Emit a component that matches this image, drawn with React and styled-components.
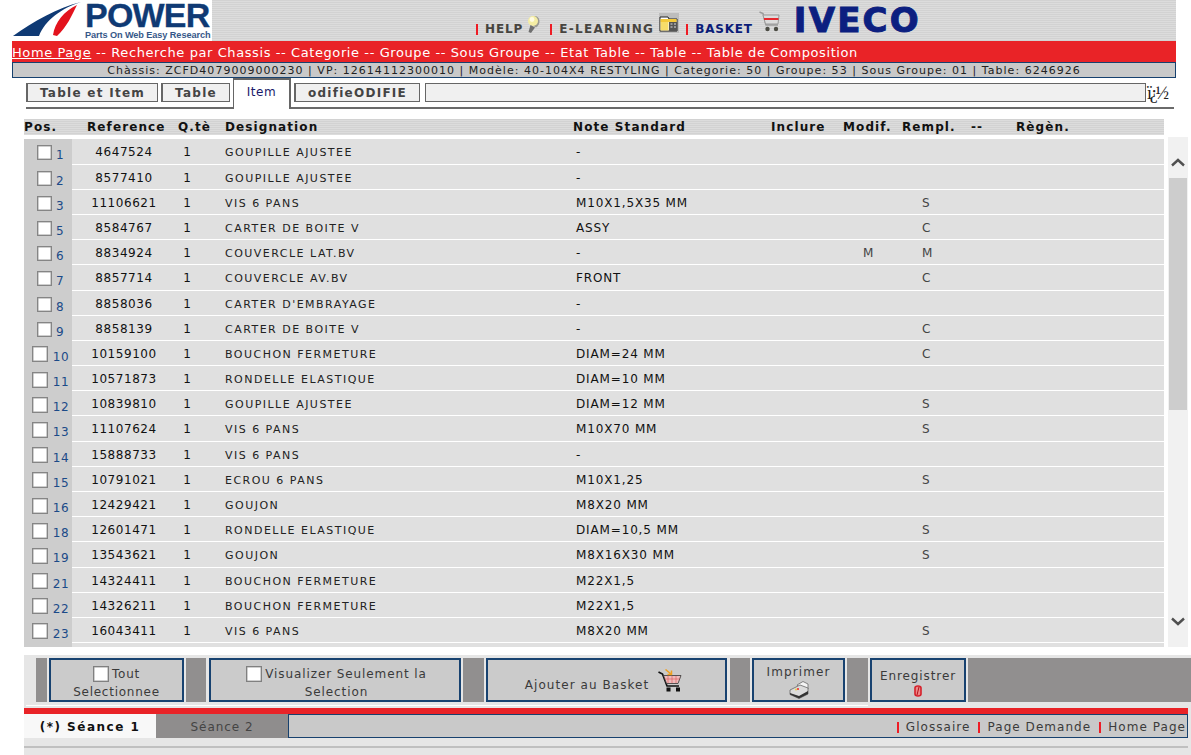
import React from "react";
import styled, { createGlobalStyle } from "styled-components";

const Global = createGlobalStyle`
  html, body { margin: 0; padding: 0; background: #fff; }
  body { font-family: "DejaVu Sans", Verdana, sans-serif; }
  * { box-sizing: border-box; }
`;

const stripes = `repeating-linear-gradient(180deg, #d2d2d2 0 1px, #dcdcdc 1px 2px)`;

const Page = styled.div`
  width: 1191px; height: 755px; overflow: hidden; position: relative; background: #fff;
`;
const Top = styled.div`
  width: 1164px; margin-left: 12px;
`;
const Header = styled.header`
  display: flex; height: 41px; background: ${stripes};
`;
const Logo = styled.div`
  width: 200px; height: 41px; background: #fff; display: flex; flex: none;
`;
const LogoText = styled.div`
  display: flex; flex-direction: column; color: #0f3a74; font-family: "Liberation Sans", Arial, sans-serif; font-weight: 700; padding-top: 1px; flex: none;
`;
const LogoWord = styled.div`
  font-size: 34px; line-height: 29px; height: 29px; letter-spacing: -0.8px; -webkit-text-stroke: 0.3px #0f3a74;
`;
const LogoSub = styled.div`
  font-size: 9.2px; line-height: 10px; letter-spacing: -0.1px; white-space: nowrap; opacity: .85;
`;
const HeadLinks = styled.nav`
  display: flex; align-items: flex-end; padding-left: 264px; height: 41px; padding-bottom: 5px; position: relative;
`;
const HeadPipe = styled.span`
  width: 2px; height: 11px; background: #ee1c25; margin: 0 7px 1px 0; flex: none; align-self: flex-end;
`;
const HeadLink = styled.span`
  font-weight: 700; font-size: 12px; line-height: 14px; letter-spacing: ${p => p.$ls || 0}px; white-space: nowrap;
  color: ${p => p.$navy ? "#0a1c78" : "#47443f"}; margin-right: ${p => p.$mr || 0}px;
`;
const IconWrap = styled.span`
  display: flex; flex: none; margin: 0 ${p => p.$mr}px ${p => p.$mb}px 0;
`;
const Iveco = styled.span`
  font-family: "DejaVu Sans", sans-serif; font-weight: 700; font-size: 34px; line-height: 30px; letter-spacing: 2.2px; color: #0c1f80;
  -webkit-text-stroke: 1px #0c1f80; margin: 0 0 1px 6px; align-self: flex-end;
`;
const RedNav = styled.div`
  height: 21px; background: #e92327; color: #fff; font-size: 13px; line-height: 23px; white-space: nowrap; letter-spacing: 0.59px;
  a { color: #fff; text-decoration: underline; }
`;
const InfoBar = styled.div`
  height: 16px; background: #c9c9c9; border: 1px solid #17416e; font-size: 11px; line-height: 15px;
  text-align: center; color: #222; white-space: nowrap; letter-spacing: 1.02px;
`;
const TabRow = styled.div`
  display: flex; align-items: flex-start; margin-left: 26px; width: 1148px; height: 31px; border-bottom: 2px solid #6a6a6a;
`;
const TabBtn = styled.button`
  height: 19px; margin: 5px 3px 0 0; padding: 0; border: 1px solid #666; border-left-width: 2px; background: #f0f0f0;
  font: 700 12px/16px "DejaVu Sans", sans-serif; color: #444; letter-spacing: 1.27px; width: ${p => p.$w}px; text-align: center; flex: none;
`;
const ActiveTab = styled.div`
  width: 58px; height: 31px; margin-right: 3px; background: #fff; border: 1px solid #666; border-top-width: 2px; border-right-width: 2px; border-bottom: 0;
  font-size: 12px; line-height: 25px; letter-spacing: .6px; text-align: center; color: #1a1a6a; flex: none;
`;
const EmptyBox = styled.div`
  width: 721px; height: 19px; margin: 5px 0 0 2px; border: 1px solid #666; background: #f0f0f0; flex: none;
`;
const Garbled = styled.span`
  font-family: "Liberation Serif", serif; font-size: 18px; line-height: 20px; letter-spacing: -2.2px; color: #222; margin: 5px 0 0 1px; white-space: nowrap;
`;
const HeadRow = styled.div`
  display: grid; grid-template-columns: 63px 91px 47px 348px 198px 72px 59px 69px 45px 1fr;
  width: 1140px; height: 16px; margin: 10px 0 2px 24px; background: ${stripes};
  font-weight: 700; font-size: 12px; line-height: 17px; color: #111; letter-spacing: 1.1px; white-space: nowrap;
`;
const Body = styled.div`
  display: flex; gap: 4px; margin-left: 24px; height: 510px;
`;
const List = styled.div`
  width: 1140px; padding-top: 2.4px; display: flex; flex-direction: column; gap: 1px; overflow: hidden; flex: none;
`;
const Row = styled.div`
  display: grid; grid-template-columns: 48px 104px 22px 27px 348px 198px 72px 59px 1fr;
  height: 24.2px; flex: none; background: #e0e0e0; font-size: 12px; line-height: 26px; color: #111; white-space: nowrap;
`;
const PosCell = styled.div`
  background: #cdcdcd; display: flex; align-items: center; justify-content: center; gap: ${p => p.$wide ? 5 : 4}px; color: #1b4a88;
  padding-left: ${p => p.$wide ? 5 : 5}px; line-height: 14px;
`;
const Box = styled.span`
  width: ${p => p.$wide ? 16 : 15}px; height: ${p => p.$wide ? 16 : 15}px; background: #fff; border: 1px solid #858585; box-shadow: inset 0 0 0 .5px #a0a0a0; display: block; flex: none;
`;
const Num = styled.span`
  margin-top: 5px; letter-spacing: .5px;
`;
const Ref = styled.div`
  text-align: center; letter-spacing: 0.55px;
`;
const Qty = styled.div` text-align: center; `;
const Desig = styled.div`
  grid-column: 5; font-size: 11px; line-height: 27px; letter-spacing: 1.48px; color: #222;
`;
const Note = styled.div`
  padding-left: 3px; letter-spacing: 0.85px;
`;
const Flag = styled.div`
  padding-left: ${p => p.$pl}px; color: #444; letter-spacing: .3px;
`;
const Scroll = styled.aside`
  width: 20px; height: 510px; background: #f1f1f1; flex: none; display: flex; flex-direction: column; align-items: center;
`;
const Arrow = styled.div`
  height: 41px; flex: none; display: flex; align-items: center; justify-content: center; padding: ${p => p.$pt || 0}px 0 ${p => p.$pb || 0}px;
`;
const Thumb = styled.div`
  width: 18px; height: 232px; background: #cdcdcd; flex: none;
`;
const Gutter = styled.div` flex: 1; `;
const Bottom = styled.footer`
  margin: 8px 0 0 24px; height: 100px; background: #e6e6e6; padding-top: 3px;
`;
const Tools = styled.div`
  display: flex; height: 44px; padding-left: 12px;
`;
const Spacer = styled.span`
  width: ${p => p.$w}px; flex: ${p => p.$grow ? 1 : "none"}; background: #918f8f; margin: 0 ${p => p.$mr ?? 2}px 0 ${p => p.$ml ?? 2}px;
`;
const Tool = styled.button`
  width: ${p => p.$w}px; height: 44px; border: 2px solid #184270; background: #cbcbcb; padding: ${p => p.$pt ?? 5}px ${p => p.$pr ?? 0}px 0 ${p => p.$pl ?? 0}px; flex: none;
  font: 12px/18px "DejaVu Sans", sans-serif; color: #3a3a3a; letter-spacing: ${p => p.$ls ?? .75}px; white-space: nowrap;
  display: flex; flex-direction: column; align-items: center; justify-content: ${p => p.$j || "center"};
`;
const ToolLine = styled.span`
  display: flex; align-items: center; justify-content: center; gap: ${p => p.$gap ?? 3}px;
`;
const ToolBox = styled.span`
  width: 16px; height: 16px; background: #fff; border: 1px solid #808080; box-shadow: inset 0 0 0 .5px #a0a0a0; display: block; flex: none;
`;
const BasketLabel = styled.span` padding-top: 10px; `;
const SaveLabel = styled.span` padding-top: 3px; `;
const WhiteLine = styled.div`
  width: 842px; height: 1px; background: #fff; margin: 3px 0 0 2px;
`;
const RedBar = styled.div`
  width: 1164px; height: 6px; background: #e92327; margin-top: 2px;
`;
const Sessions = styled.div`
  display: flex; width: 1164px; height: 24px; font-size: 12px; line-height: 27px; white-space: nowrap;
`;
const SessionOn = styled.div`
  width: 132px; height: 24px; background: #f8f8f8; color: #111; font-weight: 700; letter-spacing: 1.5px; text-align: center; flex: none;
`;
const SessionOff = styled.div`
  width: 132px; height: 24px; background: #8f8d8d; color: #444; letter-spacing: .95px; text-align: center; flex: none;
`;
const SessionBar = styled.div`
  flex: 1; height: 24px; background: #c9c9c9; border: 1px solid #17416e; display: flex; align-items: center; justify-content: flex-end; padding: 2px 1px 0 0;
  color: #3b3b3b; letter-spacing: 1.05px; line-height: 20px;
`;
const FootPipe = styled.span`
  width: 2px; height: 11px; background: #ee1c25; margin: 0 7px 0 8px; flex: none;
`;
const Rule = styled.div`
  width: 1164px; height: 2px; background: #c0c0c0; margin-top: 8px;
`;

const rows = [
  ["1","4647524","GOUPILLE AJUSTEE","-","",""],
  ["2","8577410","GOUPILLE AJUSTEE","-","",""],
  ["3","11106621","VIS 6 PANS","M10X1,5X35 MM","","S"],
  ["5","8584767","CARTER DE BOITE V","ASSY","","C"],
  ["6","8834924","COUVERCLE LAT.BV","-","M","M"],
  ["7","8857714","COUVERCLE AV.BV","FRONT","","C"],
  ["8","8858036","CARTER D'EMBRAYAGE","-","",""],
  ["9","8858139","CARTER DE BOITE V","-","","C"],
  ["10","10159100","BOUCHON FERMETURE","DIAM=24 MM","","C"],
  ["11","10571873","RONDELLE ELASTIQUE","DIAM=10 MM","",""],
  ["12","10839810","GOUPILLE AJUSTEE","DIAM=12 MM","","S"],
  ["13","11107624","VIS 6 PANS","M10X70 MM","","S"],
  ["14","15888733","VIS 6 PANS","-","",""],
  ["15","10791021","ECROU 6 PANS","M10X1,25","","S"],
  ["16","12429421","GOUJON","M8X20 MM","",""],
  ["18","12601471","RONDELLE ELASTIQUE","DIAM=10,5 MM","","S"],
  ["19","13543621","GOUJON","M8X16X30 MM","","S"],
  ["21","14324411","BOUCHON FERMETURE","M22X1,5","",""],
  ["22","14326211","BOUCHON FERMETURE","M22X1,5","",""],
  ["23","16043411","VIS 6 PANS","M8X20 MM","","S"],
];

const Swoosh = () => (
  <svg width="73" height="41" viewBox="0 0 73 41" style={{ flex: "none" }}>
    <path d="M1 36 C22 21 45 8 69 2 C50 8 33 20 27 36 Z" fill="#0f3a74" />
    <path d="M41 35 C43 22 52 11 65 5 C60 15 55 27 45 36 Z" fill="#e3131d" />
  </svg>
);
const Bulb = () => (
  <svg width="16" height="19" viewBox="0 0 16 19">
    <path d="M9 1 Q14 1 14.5 6 Q14.5 10 11 12.5 L7 10 Z" fill="#9a9a92" />
    <circle cx="8" cy="6" r="5" fill="#f4eda4" />
    <circle cx="7" cy="4.5" r="2.4" fill="#fffbe2" />
    <path d="M5.5 10 L10 12.5 L6 18 L3.5 17 Z" fill="#6f6f6f" />
  </svg>
);
const Folder = () => (
  <svg width="20" height="20" viewBox="0 0 20 20">
    <rect width="20" height="20" fill="#bdbdbd" />
    <path d="M1 4 H9 L10 6 H18 V18 H1 Z" fill="#fff" stroke="#222" />
    <rect x="1.5" y="6" width="16" height="3" fill="#f4c93a" />
    <rect x="1.5" y="9" width="8" height="8.5" fill="#f7dc6a" />
    <rect x="10" y="9" width="8" height="9" fill="#555" />
    <path d="M11.5 11 h2 M15 11 h2 M11.5 14 h2 M15 14 h2" stroke="#ddd" />
  </svg>
);
const Cart = () => (
  <svg width="21" height="21" viewBox="0 0 21 21">
    <path d="M0.5 1 L4 2.5 L7 14 H19" fill="none" stroke="#9a9a9a" strokeWidth="1.5" />
    <path d="M4 4 H20 L19 13 H6.5 Z" fill="#dcdcdc" stroke="#9a9a9a" />
    <rect x="5" y="7" width="14.5" height="2" fill="#e5282e" />
    <circle cx="8.5" cy="18" r="2.2" fill="#4c4c44" />
    <circle cx="17" cy="18" r="2.2" fill="#4c4c44" />
  </svg>
);
const AddCart = () => (
  <svg width="24" height="23" viewBox="0 0 24 23">
    <path d="M0.5 3 L4.5 5 L9 17 H21" fill="none" stroke="#111" strokeWidth="1.7" />
    <path d="M5.5 6.5 H23 L20 14.5 H8.5 Z" fill="#eebcbc" stroke="#333" strokeWidth=".8" />
    <path d="M10 7 V14 M14 7 V14 M18 7 V14 M7 10 H22" stroke="#d55" strokeWidth=".6" />
    <rect x="8.5" y="18.5" width="4" height="4" fill="#111" />
    <rect x="18" y="18.5" width="4" height="4" fill="#111" />
    <path d="M7.5 0.5 L13 5 M13.5 1.5 V5.5 H9.5" fill="none" stroke="#f0a020" strokeWidth="1.5" />
  </svg>
);
const Printer = () => (
  <svg width="20" height="18" viewBox="0 0 20 18">
    <path d="M8 4 L14 0.5 L19 3 L19 8 L13 10 Z" fill="#f4f4f4" stroke="#6a6a6a" strokeWidth=".8" />
    <path d="M1 9 L11 4 L19 7 V13 L10 17.5 L1 13.5 Z" fill="#dcdcdc" stroke="#666" strokeWidth=".8" />
    <path d="M1 12 L10 15 L19 10 V13 L10 17.5 L1 13.5 Z" fill="#333" />
    <circle cx="9" cy="8" r="1.1" fill="#e33" />
    <circle cx="7" cy="8.5" r="1" fill="#e8d040" />
  </svg>
);
const Save = () => (
  <svg width="10" height="12" viewBox="0 0 10 12">
    <path d="M2 3 Q2 1 5 1 Q8 1 8 3 V9 Q8 11 5 11 Q2 11 2 9 Z" fill="#e88" stroke="#d5202a" strokeWidth="1.6" />
    <path d="M6 2 L4 10" stroke="#b01018" strokeWidth="1" />
  </svg>
);
const Chevron = ({ down }) => (
  <svg width="14" height="9" viewBox="0 0 14 9">
    <path d={down ? "M1 1.5 L7 7 L13 1.5" : "M1 7.5 L7 2 L13 7.5"} fill="none" stroke="#505050" strokeWidth="2.4" />
  </svg>
);

export default function App() {
  return (
    <Page>
      <Global />
      <Top>
        <Header>
          <Logo>
            <Swoosh />
            <LogoText>
              <LogoWord>POWER</LogoWord>
              <LogoSub>Parts On Web Easy Research</LogoSub>
            </LogoText>
          </Logo>
          <HeadLinks>
            <HeadPipe />
            <HeadLink $mr={2} $ls={0.9}>HELP</HeadLink>
            <IconWrap $mr={9} $mb={2}><Bulb /></IconWrap>
            <HeadPipe />
            <HeadLink $mr={5} $ls={1.3}>E-LEARNING</HeadLink>
            <IconWrap $mr={7} $mb={3}><Folder /></IconWrap>
            <HeadPipe />
            <HeadLink $mr={6} $navy $ls={0.8}>BASKET</HeadLink>
            <IconWrap $mr={8} $mb={4}><Cart /></IconWrap>
            <Iveco>IVECO</Iveco>
          </HeadLinks>
        </Header>
        <RedNav>
          <a href="#home">Home Page</a> -- Recherche par Chassis -- Categorie -- Groupe -- Sous Groupe -- Etat Table -- Table -- Table de Composition
        </RedNav>
        <InfoBar>Chàssis: ZCFD4079009000230 | VP: 12614112300010 | Modèle: 40-104X4 RESTYLING | Categorie: 50 | Groupe: 53 | Sous Groupe: 01 | Table: 6246926</InfoBar>
      </Top>
      <TabRow>
        <TabBtn $w={132}>Table et Item</TabBtn>
        <TabBtn $w={69}>Table</TabBtn>
        <ActiveTab>Item</ActiveTab>
        <TabBtn $w={126}>odifieODIFIE</TabBtn>
        <EmptyBox />
        <Garbled>ï¿½</Garbled>
      </TabRow>
      <HeadRow>
        <span>Pos.</span><span>Reference</span><span>Q.tè</span><span>Designation</span><span>Note Standard</span>
        <span>Inclure</span><span>Modif.</span><span>Rempl.</span><span>--</span><span>Règèn.</span>
      </HeadRow>
      <Body>
        <List>
          {rows.map(([pos, ref, des, note, mod, rem]) => (
            <Row key={pos}>
              <PosCell $wide={pos.length > 1}><Box $wide={pos.length > 1} /><Num>{pos}</Num></PosCell>
              <Ref>{ref}</Ref>
              <Qty>1</Qty>
              <Desig>{des}</Desig>
              <Note>{note}</Note>
              <span />
              <Flag $pl={20}>{mod}</Flag>
              <Flag $pl={20}>{rem}</Flag>
            </Row>
          ))}
          <Row><PosCell /></Row>
        </List>
        <Scroll>
          <Arrow $pt={10}><Chevron /></Arrow>
          <Thumb />
          <Gutter />
          <Arrow $pb={10}><Chevron down /></Arrow>
        </Scroll>
      </Body>
      <Bottom>
        <Tools>
          <Spacer $w={11} $ml={0} />
          <Tool $w={135}>
            <ToolLine><ToolBox />Tout</ToolLine>
            Selectionnee
          </Tool>
          <Spacer $w={20} $mr={3} />
          <Tool $w={252} $ls={.9} $pl={3}>
            <ToolLine><ToolBox />Visualizer Seulement la</ToolLine>
            Selection
          </Tool>
          <Spacer $w={21} />
          <Tool $w={241} $ls={1.05} $pt={0} $pr={6}>
            <ToolLine $gap={9}><BasketLabel>Ajouter au Basket</BasketLabel><AddCart /></ToolLine>
          </Tool>
          <Spacer $w={20} $ml={3} />
          <Tool $w={93} $j="flex-start" $pt={3} $ls={1.1}>
            Imprimer
            <Printer />
          </Tool>
          <Spacer $w={21} />
          <Tool $w={96} $j="flex-start" $ls={.9} $pt={4}>
            <SaveLabel>Enregistrer</SaveLabel>
            <Save />
          </Tool>
          <Spacer $grow $mr={0} />
        </Tools>
        <WhiteLine />
        <RedBar />
        <Sessions>
          <SessionOn>(*) Séance 1</SessionOn>
          <SessionOff>Séance 2</SessionOff>
          <SessionBar>
            <FootPipe />Glossaire<FootPipe />Page Demande<FootPipe />Home Page
          </SessionBar>
        </Sessions>
        <Rule />
      </Bottom>
    </Page>
  );
}
